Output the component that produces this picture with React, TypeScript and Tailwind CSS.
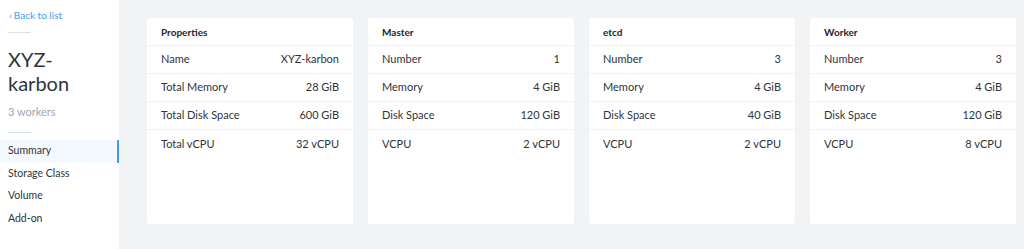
import * as React from "react"

// ── Data ──────────────────────────────────────────────────────
interface Card {
  title: string
  rows: [string, string][]
}

const cards: Card[] = [
  {
    title: "Properties",
    rows: [
      ["Name", "XYZ-karbon"],
      ["Total Memory", "28 GiB"],
      ["Total Disk Space", "600 GiB"],
      ["Total vCPU", "32 vCPU"],
    ],
  },
  {
    title: "Master",
    rows: [
      ["Number", "1"],
      ["Memory", "4 GiB"],
      ["Disk Space", "120 GiB"],
      ["VCPU", "2 vCPU"],
    ],
  },
  {
    title: "etcd",
    rows: [
      ["Number", "3"],
      ["Memory", "4 GiB"],
      ["Disk Space", "40 GiB"],
      ["VCPU", "2 vCPU"],
    ],
  },
  {
    title: "Worker",
    rows: [
      ["Number", "3"],
      ["Memory", "4 GiB"],
      ["Disk Space", "120 GiB"],
      ["VCPU", "8 vCPU"],
    ],
  },
]

const navItems: string[] = ["Summary", "Storage Class", "Volume", "Add-on"]

// ── Component ─────────────────────────────────────────────────
function InfoCard({ card }: { card: Card }): React.JSX.Element {
  return (
    <div className="flex h-[206px] w-[206px] flex-col rounded-[3px] bg-white">
      <div className="flex h-[28px] shrink-0 items-center border-b border-[#f1f2f4] px-[14px] pt-px text-[10px] font-bold text-[#22272e]">
        {card.title}
      </div>
      {card.rows.map(
        ([label, value]: [string, string], i: number): React.JSX.Element => (
          <div
            key={label}
            className={
              "flex h-[28px] shrink-0 items-center justify-between px-[14px] text-[11px] text-[#2f343b]" +
              (i < card.rows.length - 1 ? " border-b border-[#f1f2f4]" : "")
            }
          >
            <span>{label}</span>
            <span>{value}</span>
          </div>
        )
      )}
    </div>
  )
}

export default function App(): React.JSX.Element {
  return (
    <div
      className="flex h-[249px] w-[1024px] bg-[#f2f3f5]"
      style={{ fontFamily: "Lato, 'Open Sans', sans-serif" }}
    >
      {/* Sidebar */}
      <aside className="flex w-[119px] flex-col bg-white pt-[7px]">
        <a className="flex h-[16px] items-center gap-[2px] px-[9px] text-[10px] text-[#3d9cf0]">
          <span>‹</span>Back to list
        </a>
        <div className="mx-[8px] mt-[9px] h-px w-[23px] bg-[#dde1e6]" />
        <h1 className="mt-[14px] px-[8px] text-[20px] leading-[24px] text-[#30353c]">
          XYZ-
          <br />
          karbon
        </h1>
        <p className="mt-[9px] px-[8px] text-[11px] leading-[16px] text-[#a1a7b0]">3 workers</p>
        <div className="mx-[8px] mt-[12px] h-px w-[23px] bg-[#dde1e6]" />
        <nav className="mt-[7px] flex flex-col">
          {navItems.map(
            (item: string, i: number): React.JSX.Element => (
              <div
                key={item}
                className={
                  "flex h-[22.5px] items-center px-[8px] text-[10.5px] text-[#2f343b]" +
                  (i === 0 ? " border-r-2 border-[#3d9cf0] bg-[#f3f9fe]" : "")
                }
              >
                {item}
              </div>
            )
          )}
        </nav>
      </aside>

      {/* Main */}
      <main className="flex gap-[15px] pl-[28px] pt-[18px]">
        {cards.map(
          (c: Card): React.JSX.Element => (
            <InfoCard key={c.title} card={c} />
          )
        )}
      </main>
    </div>
  )
}
